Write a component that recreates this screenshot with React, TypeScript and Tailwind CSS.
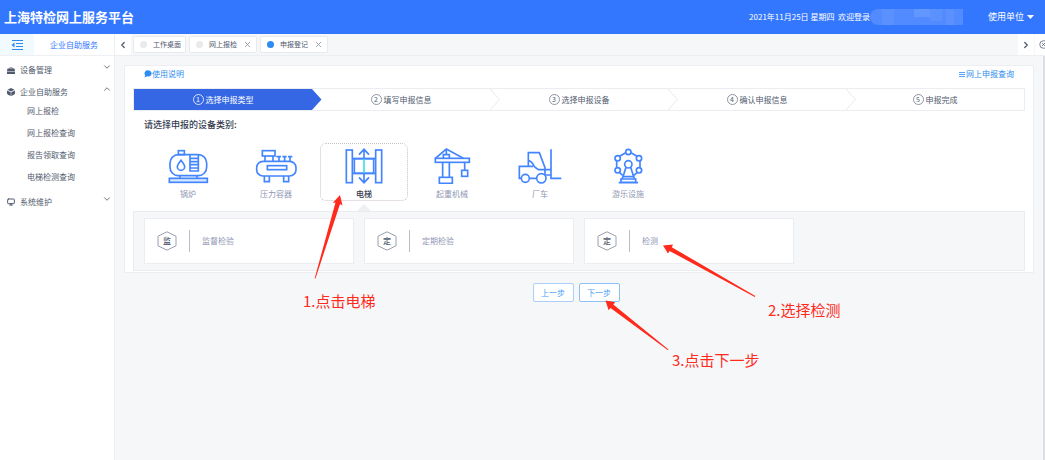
import type { ReactNode } from "react";
import {
  ChevronDown,
  ChevronLeft,
  ChevronRight,
  ChevronUp,
  CircleX,
  Monitor,
  X,
} from "lucide-react";

const steps = ["选择申报类型", "填写申报信息", "选择申报设备", "确认申报信息", "申报完成"];

const tabs = [
  { label: "工作桌面", closable: false, active: false },
  { label: "网上报检", closable: true, active: false },
  { label: "申报登记", closable: true, active: true },
];

const subMenu = ["网上报检", "网上报检查询", "报告领取查询", "电梯检测查询"];

const inspections = [
  { mark: "监", label: "监督检验" },
  { mark: "定", label: "定期检验" },
  { mark: "定", label: "检测" },
];

const categories: { label: string; active?: boolean; icon: ReactNode }[] = [
  {
    label: "锅炉",
    icon: (
      <>
        <rect x="15" y="20" width="110" height="63" rx="25" />
        <rect x="40" y="8" width="18" height="12" />
        <path d="M48 37c7 9 11 14 11 19a11 11 0 0 1-22 0c0-5 4-10 11-19z" />
        <path d="M75 20v49h25V20M75 31h25M75 41h25M75 50h25M75 60h25" />
        <path d="M45 83v8M96 83v8" />
        <rect x="13" y="91" width="114" height="12" fill="#d6e6ff" />
      </>
    ),
  },
  {
    label: "压力容器",
    icon: (
      <>
        <rect x="11" y="40" width="118" height="44" rx="19" />
        <rect x="43" y="53" width="58" height="12" />
        <rect x="28" y="8" width="38" height="16" />
        <path d="M36 24v16M60 24v16" />
        <path d="M78 26v14M95 26v14M111 26v14M70 26h14M88 26h13M105 26h13" />
        <path d="M34 84v17h15V84M92 84v17h15V84" />
      </>
    ),
  },
  {
    label: "电梯",
    active: true,
    icon: (
      <>
        <rect x="16" y="6" width="18" height="98" />
        <rect x="104" y="6" width="18" height="98" />
        <rect x="40" y="32" width="58" height="44" />
        <path d="M34 32h70M34 76h70" />
        <path d="M69 5v27M69 76v28M54 20 69 4l15 16M54 88l15 16 15-16" />
        <path d="M69 34v40" stroke="#3fe0f0" />
      </>
    ),
  },
  {
    label: "起重机械",
    icon: (
      <>
        <rect x="19" y="31" width="102" height="12" />
        <path d="M19 31 52 3l51 28M52 3v17" />
        <path d="M43 31V20h18v11" />
        <path d="M41 43v45M61 43v45" />
        <rect x="31" y="88" width="39" height="18" />
        <path d="M107 43v24" />
        <rect x="98" y="67" width="18" height="18" />
      </>
    ),
  },
  {
    label: "厂车",
    icon: (
      <>
        <path d="M13 91H7V55h41M34 55V14h33l17 45v22" />
        <path d="M34 38c12 2 14 10 18 18l12 9h38M86 81h16M38 91h20" />
        <circle cx="25" cy="91" r="12" />
        <circle cx="73" cy="91" r="14" />
        <path d="M102 4v87h31" />
      </>
    ),
  },
  {
    label: "游乐设施",
    icon: (
      <>
        <circle cx="70" cy="12" r="8" />
        <circle cx="38" cy="31" r="8" />
        <circle cx="102" cy="31" r="8" />
        <circle cx="38" cy="67" r="8" />
        <circle cx="102" cy="67" r="8" />
        <circle cx="70" cy="49" r="11" />
        <path d="M62 14 44 25M78 14l18 11M35 39v20M105 39v20M43 73l10 9M97 73l-10 9" />
        <path d="M63 58 54 86h32l-9-28M54 86l-3 7M86 86l3 7" />
        <path d="M48 93h44v10H48zM41 104h58" />
      </>
    ),
  },
];

function Header() {
  return (
    <header className="flex h-[34px] items-center justify-between bg-[#3377ff] pl-1 pr-[11px] text-white">
      <h1 className="text-[13px] font-bold">上海特检网上服务平台</h1>
      <div className="flex items-center text-[8px]">
        <span className="whitespace-pre">2021年11月25日 星期四  欢迎登录</span>
        <span className="flex h-4 w-[93px] overflow-hidden rounded-l-lg bg-white/15">
          <span className="ml-3 w-3 bg-white/5" />
          <span className="ml-5 h-2 w-4 bg-white/10" />
          <span className="h-3 w-3 bg-white/5" />
          <span className="ml-1 w-2 bg-white/5" />
        </span>
        <button className="ml-[25px] flex items-center gap-[3px] text-[9px]">
          使用单位
          <svg width="7" height="4" viewBox="0 0 7 4" fill="currentColor">
            <path d="M0 0h7L3.500 4z" />
          </svg>
        </button>
      </div>
    </header>
  );
}

function TabBar() {
  return (
    <div className="flex h-[22px] border-b border-[#eceef1] bg-[#f5f7f9]">
      <button className="flex w-4 items-center justify-center bg-white" aria-label="prev">
        <ChevronLeft size={10} strokeWidth={3} />
      </button>
      <div className="flex flex-1 items-center gap-[3px] px-[2px] text-[7px]">
        {tabs.map((tab) => (
          <button
            key={tab.label}
            className="flex h-[17px] items-center rounded-xs border border-[#e8eaec] bg-white pl-[6px] pr-1"
          >
            <span
              className={
                tab.active
                  ? "mr-[6px] size-[7px] rounded-full bg-[#2d8cf0]"
                  : "mr-[6px] size-[7px] rounded-full bg-[#e8eaec]"
              }
            />
            {tab.label}
            {tab.closable && <X size={9} className="ml-[6px] text-[#808695]" />}
          </button>
        ))}
      </div>
      <button className="flex w-4 items-center justify-center bg-white" aria-label="next">
        <ChevronRight size={10} strokeWidth={3} />
      </button>
      <button className="ml-px flex w-[10px] items-center overflow-hidden bg-white pl-1" aria-label="close">
        <CircleX size={9} className="shrink-0" />
      </button>
    </div>
  );
}

function MenuRow({ icon, label, open }: { icon: ReactNode; label: string; open?: boolean }) {
  return (
    <button className="flex h-[22px] w-full items-center gap-1 pl-[7px] pr-[2px]">
      <span className="flex w-2 justify-center">{icon}</span>
      <span className="ml-px flex-1 text-left">{label}</span>
      <span className="self-start pt-[3px]">
        {open ? <ChevronUp size={10} /> : <ChevronDown size={10} />}
      </span>
    </button>
  );
}

function Sidebar() {
  return (
    <aside className="flex w-[115px] shrink-0 flex-col border-r border-[#eceef1] bg-white">
      <div className="flex h-[22px] border-b border-[#eef0f3]">
        <button className="flex w-[34px] items-center justify-center bg-[#f0faff]" aria-label="menu">
          <svg width="12" height="12" viewBox="0 0 12 12" fill="none" stroke="#2d8cf0" strokeWidth="1.200">
            <path d="M1 1.500h11M5 4.500h7M5 7.500h7M1 10.500h11" />
            <path d="M3.500 3.500.5 6l3 2.500z" fill="#2d8cf0" stroke="none" />
          </svg>
        </button>
        <div className="flex flex-1 items-center justify-center text-[8px] text-[#3377ff]">企业自助服务</div>
      </div>
      <nav className="pt-[3px] text-[8px]">
        <MenuRow
          label="设备管理"
          icon={
            <svg width="8" height="7" viewBox="0 0 16 14" fill="currentColor">
              <path d="M5 3V1h6v2h4l1 5H0l1-5zM6.500 3h3v-.8h-3zM0 8.800h16V14H0z" />
            </svg>
          }
        />
        <MenuRow
          label="企业自助服务"
          open
          icon={
            <svg width="8" height="8" viewBox="0 0 16 16" fill="currentColor">
              <path d="M8 0l7 3.500-7 3.500-7-3.500zM0 5l7.500 3.500V16L2 13.500 0 11zM16 5 8.500 8.500V16l5.500-2.500 2-2.500z" />
            </svg>
          }
        />
        <ul className="flex flex-col gap-[6px] pb-[6px] pl-[27px]">
          {subMenu.map((item) => (
            <li key={item} className="flex h-4 items-center">
              <a href="#">{item}</a>
            </li>
          ))}
        </ul>
        <MenuRow label="系统维护" icon={<Monitor size={8} strokeWidth={3} />} />
      </nav>
    </aside>
  );
}

function Steps() {
  return (
    <ol className="grid h-[23px] grid-cols-5 border border-[#ebedf0] text-[8px]">
      {steps.map((step, i) => (
        <li
          key={step}
          className={
            i === 0
              ? "relative flex items-center justify-center gap-[2px] bg-[#3567e4] text-white"
              : "relative flex items-center justify-center gap-[2px]"
          }
        >
          <span
            className={
              i === 0
                ? "flex size-[11px] items-center justify-center rounded-full border border-white/80 text-[7px] leading-none"
                : "flex size-[11px] items-center justify-center rounded-full border border-[#8f95a3] text-[7px] leading-none"
            }
          >
            {i + 1}
          </span>
          {step}
          {i < steps.length - 1 && (
            <svg
              className="absolute left-full top-0 z-10 h-full w-[10px]"
              viewBox="0 0 10 22"
              preserveAspectRatio="none"
              fill={i === 0 ? "#3567e4" : "none"}
              stroke={i === 0 ? "none" : "#e4e7ec"}
            >
              <path d="M0 0 9.500 11 0 22" />
            </svg>
          )}
        </li>
      ))}
    </ol>
  );
}

function Categories() {
  return (
    <div className="mt-1 flex px-[11px]">
      {categories.map((c) => (
        <button
          key={c.label}
          className={
            c.active
              ? "relative flex h-[58px] w-[88px] flex-col items-center rounded-md border border-dotted border-[#c9bfc9] pt-1 text-[8px] font-medium text-[#343b4f]"
              : "flex h-[58px] w-[88px] flex-col items-center border border-transparent pt-1 text-[8px] text-[#8f96b3]"
          }
        >
          <svg width="46" height="36" viewBox="0 0 138 108" fill="none" stroke="#4385ff" strokeWidth="5">
            {c.icon}
          </svg>
          <span className="mt-1 leading-3">{c.label}</span>
          {c.active && (
            <svg className="absolute left-1/2 top-full mt-1 -translate-x-1/2" width="14" height="7" viewBox="0 0 14 7">
              <path d="M0 7 7 0l7 7z" fill="#eef0f3" />
            </svg>
          )}
        </button>
      ))}
    </div>
  );
}

function Inspections() {
  return (
    <div className="mt-[10px] grid grid-cols-4 gap-[10px] border border-[#eaecef] bg-[#f5f7f9] px-[10px] py-[6px]">
      {inspections.map((item) => (
        <button
          key={item.label}
          className="flex h-[46px] items-center gap-3 border border-[#ebedf0] bg-white pl-3 text-[8px] text-[#8f96b3]"
        >
          <span className="relative flex h-5 w-5 items-center justify-center font-medium text-[#515a6e]">
            <svg className="absolute inset-0" width="20" height="20" viewBox="0 0 20 20" fill="none" stroke="#9aa0ad">
              <path d="M10 .8 19 5.200v9.600l-9 4.400-9-4.400V5.200z" />
            </svg>
            {item.mark}
          </span>
          <span className="h-[22px] w-px bg-[#b9bdca]" />
          {item.label}
        </button>
      ))}
    </div>
  );
}

// Red walkthrough arrows and captions, drawn above the page
function Guide() {
  return (
    <div className="pointer-events-none absolute left-0 top-0 z-20 text-[15px] leading-5 text-[#ff2a1c]">
      <svg width="800" height="400" viewBox="0 0 800 400" fill="currentColor">
        <path d="M340 195l2.500 10.500-2.500-1.500-24.500 74.500-.8-.3L335.500 202.500l-2.800.5z" />
        <path d="M663 245.500l10-1-1.200 2.700L755.300 296l-.5.900-85.300-46-1.500 2.500z" />
        <path d="M605.500 300.500l9.700 1.700-1.900 2.300 55.200 45-.5.800-57.500-42.300-1.900 2.200z" />
      </svg>
      <p className="absolute left-[303px] top-[291px] whitespace-nowrap">1.点击电梯</p>
      <p className="absolute left-[768px] top-[300px] whitespace-nowrap">2.选择检测</p>
      <p className="absolute left-[672px] top-[350px] whitespace-nowrap">3.点击下一步</p>
    </div>
  );
}

export default function App() {
  return (
    <div className="relative flex min-h-screen flex-col overflow-hidden bg-[#f5f7f9] font-['Noto_Sans_CJK_SC',sans-serif] text-[#515a6e]">
      <Header />
      <div className="flex flex-1">
        <Sidebar />
        <div className="flex min-w-0 flex-1 flex-col">
          <TabBar />
          <main className="flex-1 border-r-2 border-[#dcdee2] px-[9px] pt-[9px]">
            <section className="border border-[#eceef1] bg-white px-2 pb-px">
              <div className="flex h-[22px] items-start justify-between px-[11px] text-[8px] leading-4 text-[#2d8cf0]">
                <a href="#" className="flex items-center">
                  <svg width="8" height="8" viewBox="0 0 16 16" fill="currentColor">
                    <path d="M9 1a6 6 0 1 1-2 11.600L1 15l1.500-4.500A6 6 0 0 1 9 1z" />
                  </svg>
                  使用说明
                </a>
                <a href="#" className="flex items-center gap-px">
                  <svg width="6" height="5" viewBox="0 0 6 5" stroke="currentColor" strokeWidth=".8">
                    <path d="M0 .5h6M0 2.500h6M0 4.500h6" />
                  </svg>
                  网上申报查询
                </a>
              </div>
              <Steps />
              <h2 className="px-[11px] text-[9px] font-medium leading-7 text-[#343b4f]">请选择申报的设备类别:</h2>
              <Categories />
              <Inspections />
            </section>
            <div className="mt-[10px] flex justify-center gap-[5px] pr-[6px] text-[8px] text-[#4a9cf5]">
              <button className="h-[19px] w-[41px] rounded-xs border border-[#a9cffa] bg-white">上一步</button>
              <button className="h-[19px] w-[41px] rounded-xs border border-[#8ec0f8] bg-white">下一步</button>
            </div>
          </main>
        </div>
      </div>
      <Guide />
    </div>
  );
}
